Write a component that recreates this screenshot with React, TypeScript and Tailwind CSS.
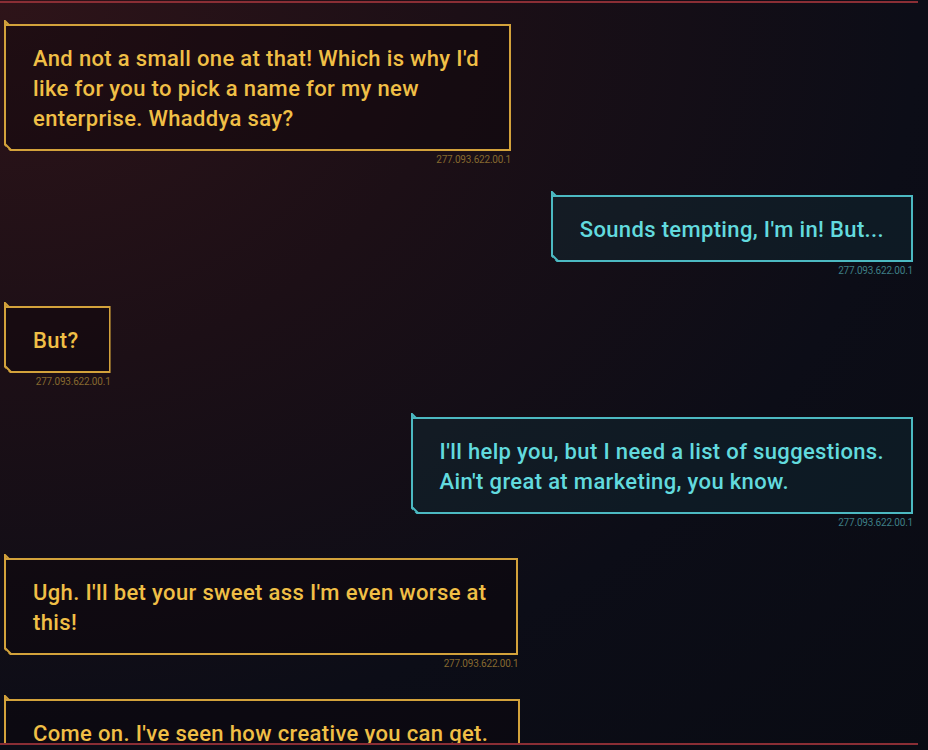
import React from "react"

type Msg = {
  from: "npc" | "v"
  lines: string[]
  stamp: string
}

const messages: Msg[] = [
  {
    from: "npc",
    lines: [
      "And not a small one at that! Which is why I'd",
      "like for you to pick a name for my new",
      "enterprise. Whaddya say?",
    ],
    stamp: "277.093.622.00.1",
  },
  { from: "v", lines: ["Sounds tempting, I'm in! But..."], stamp: "277.093.622.00.1" },
  { from: "npc", lines: ["But?"], stamp: "277.093.622.00.1" },
  {
    from: "v",
    lines: ["I'll help you, but I need a list of suggestions.", "Ain't great at marketing, you know."],
    stamp: "277.093.622.00.1",
  },
  {
    from: "npc",
    lines: ["Ugh. I'll bet your sweet ass I'm even worse at", "this!"],
    stamp: "277.093.622.00.1",
  },
  { from: "npc", lines: ["Come on. I've seen how creative you can get."], stamp: "277.093.622.00.1" },
]

function Bubble({ msg }: { msg: Msg }) {
  const npc = msg.from === "npc"
  const stroke = npc ? "#d3a23b" : "#4cb9c2"
  return (
    <div className={npc ? "flex flex-col items-end self-start" : "flex flex-col items-end self-end"}>
      <div className="relative w-fit">
        <div
          className={
            npc
              ? "border-2 border-[#d3a23b] bg-[#0d0609]/40 pl-[27px] pr-[30px] pt-[18px] pb-[15px] text-[22px] leading-[30px] tracking-[0.35px] font-medium text-[#f0bf46] [clip-path:polygon(0_0,100%_0,100%_100%,6px_100%,0_calc(100%-6px))]"
              : "border-2 border-[#4cb9c2] bg-[#123039]/40 pl-[27px] pr-[27px] pt-[18px] pb-[15px] text-[22px] leading-[30px] tracking-[0.35px] font-medium text-[#62dade] [clip-path:polygon(0_0,100%_0,100%_100%,6px_100%,0_calc(100%-6px))]"
          }
        >
          {msg.lines.map((l, i) => (
            <div key={i} className="whitespace-nowrap">
              {l}
            </div>
          ))}
        </div>
        {/* top-left tab */}
        <svg className="absolute -top-[4px] left-0 h-[8px] w-[8px]" viewBox="0 0 8 8" fill="none">
          <polyline points="1,8 1,1 5,5 8,5" stroke={stroke} strokeWidth="2" />
        </svg>
        {/* bottom-left chamfer */}
        <svg className="absolute bottom-0 left-0 h-[8px] w-[8px]" viewBox="0 0 8 8" fill="none">
          <polyline points="1,0 1,1 7,7 8,7" stroke={stroke} strokeWidth="2" />
        </svg>
      </div>
      <div
        className={
          npc
            ? "mt-[3px] text-[10px] leading-[11px] tracking-[-0.2px] text-[#86692f]"
            : "mt-[3px] text-[10px] leading-[11px] tracking-[-0.2px] text-[#3e7f86]"
        }
      >
        {msg.stamp}
      </div>
    </div>
  )
}

export default function App() {
  return (
    <div className="h-[750px] w-[928px] overflow-hidden bg-[radial-gradient(ellipse_at_top_left,#2e1419_0%,#1c0f16_35%,#0c0d17_70%,#090b13_100%)] font-['Roboto',sans-serif]">
      <div className="flex h-full w-[918px] flex-col">
        <div className="mt-[1px] h-[2px] bg-[#8a2e35]" />
        <div className="flex flex-1 flex-col gap-[30px] overflow-hidden pl-[4px] pr-[5px] pt-[21px]">
          {messages.map((m, i) => (
            <Bubble key={i} msg={m} />
          ))}
        </div>
        <div className="h-[2px] bg-[#8a2e35]" />
        <div className="h-[5px]" />
      </div>
    </div>
  )
}
